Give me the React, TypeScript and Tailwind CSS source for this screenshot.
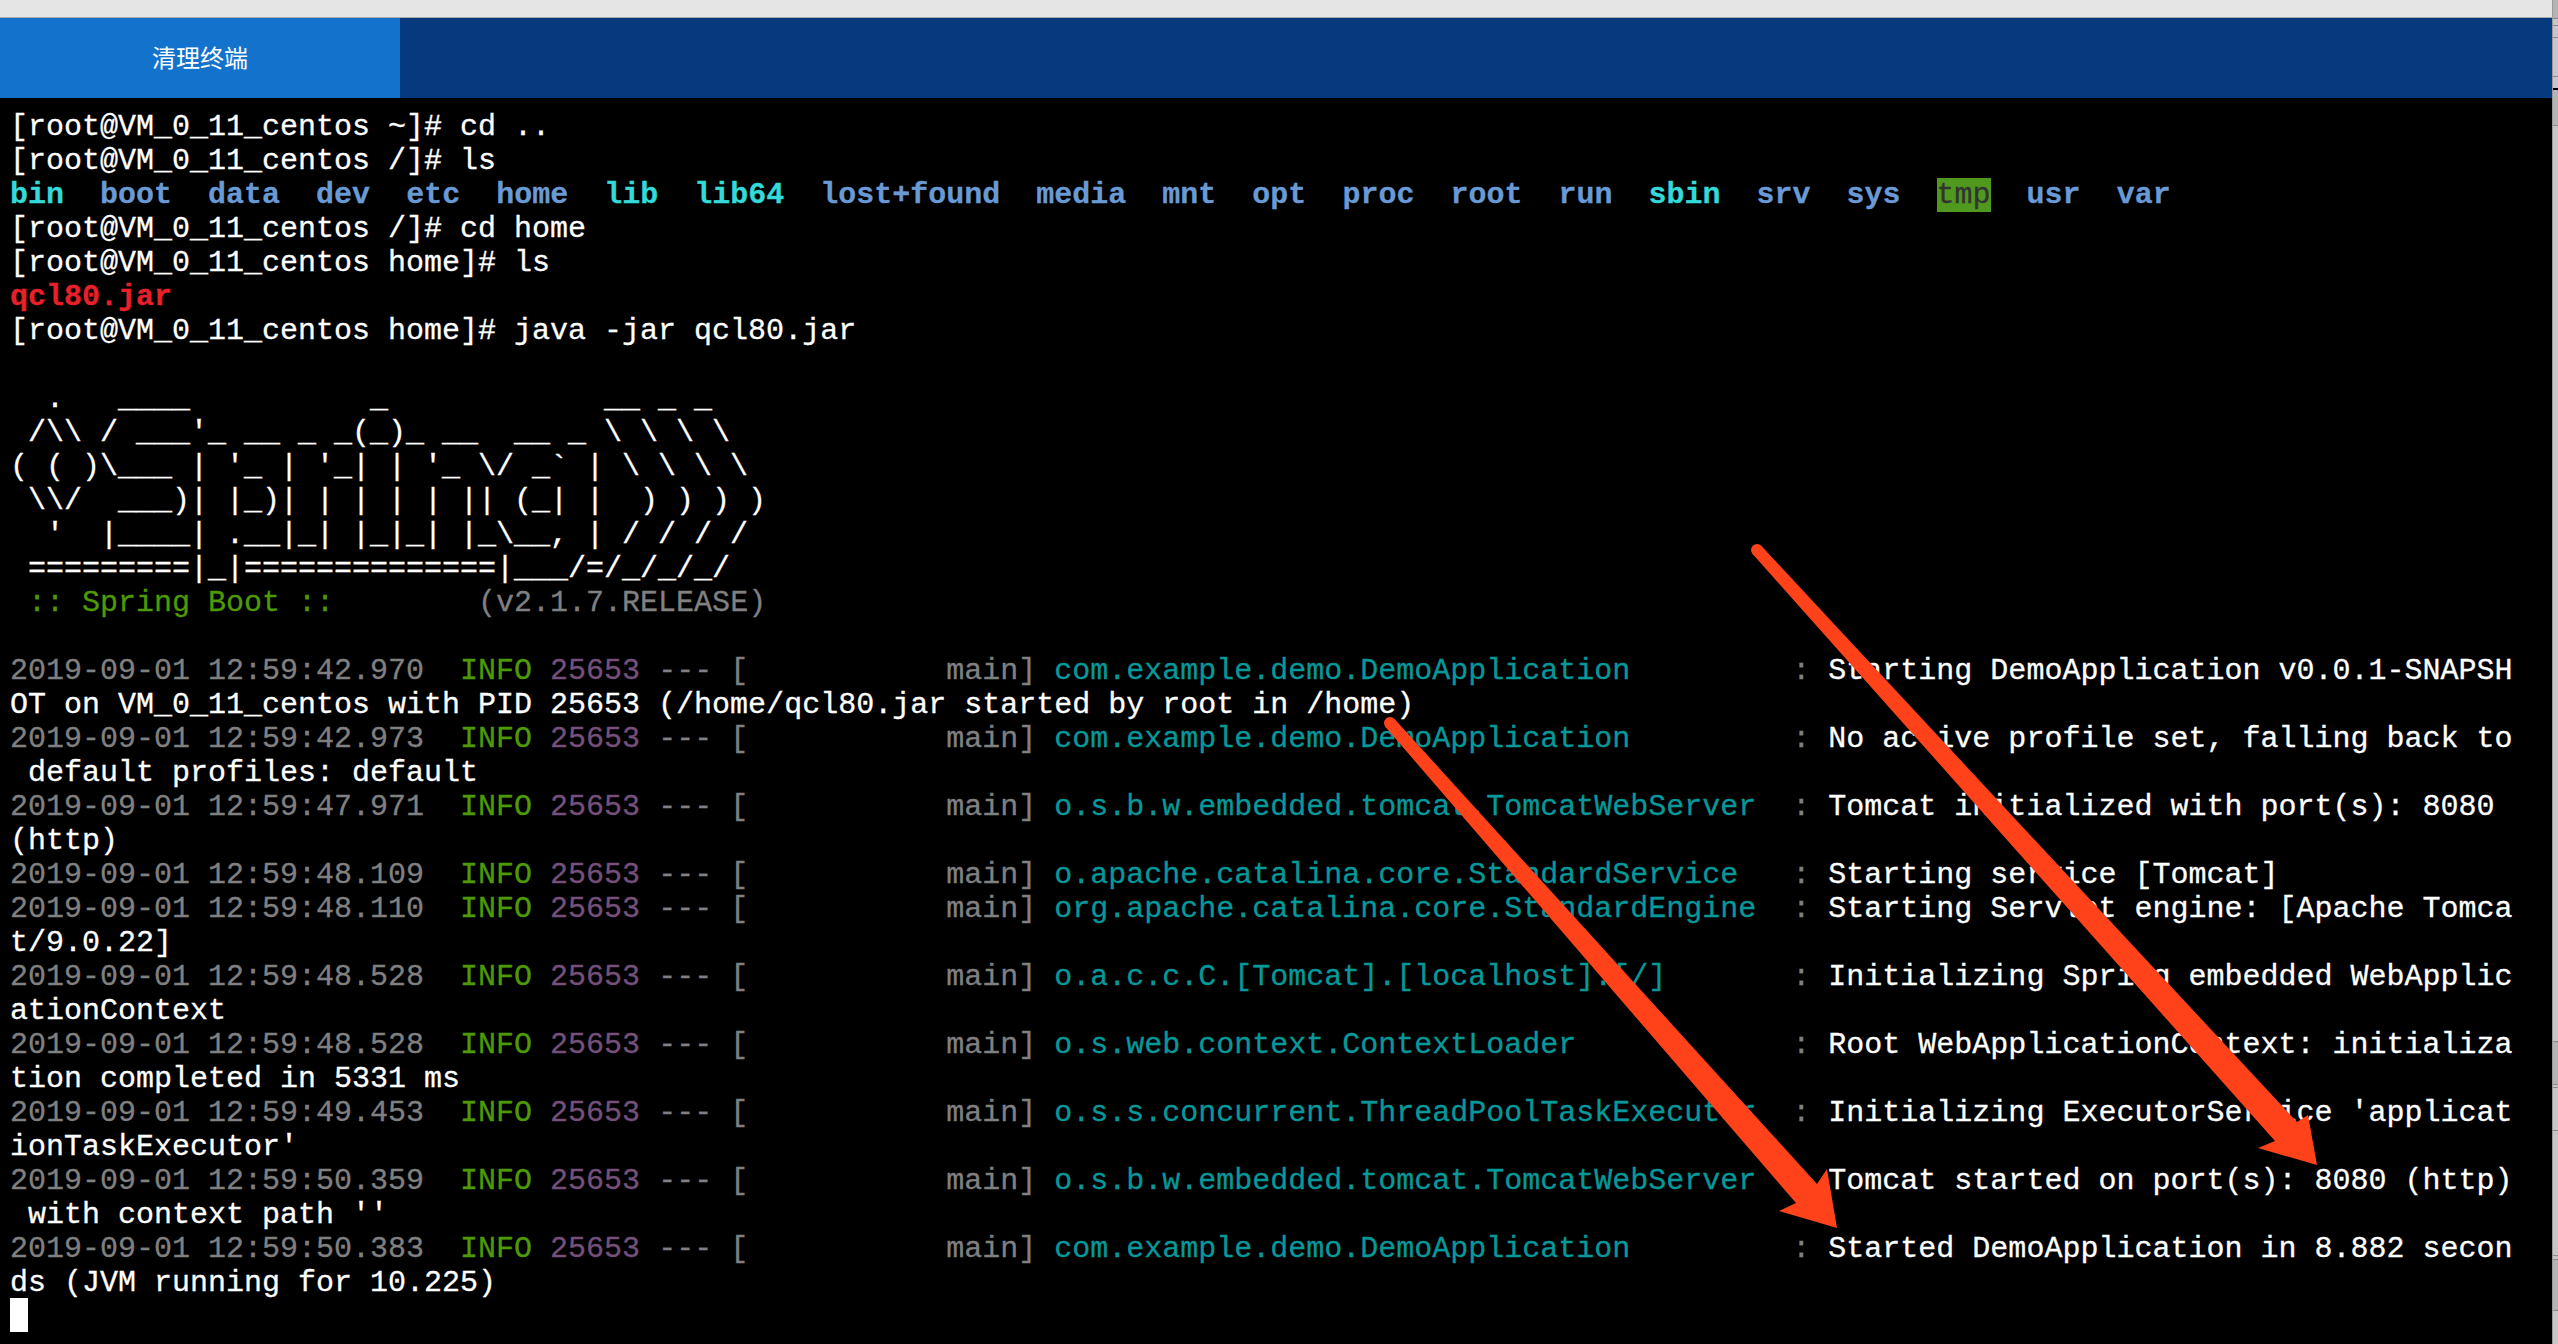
import React from "react";

type Log = { t: string; pid?: string; logger: string; msg: string; cont?: string };

const logs: Log[] = [
  { t: "2019-09-01 12:59:42.970", logger: "com.example.demo.DemoApplication        ", msg: "Starting DemoApplication v0.0.1-SNAPSH", cont: "OT on VM_0_11_centos with PID 25653 (/home/qcl80.jar started by root in /home)" },
  { t: "2019-09-01 12:59:42.973", logger: "com.example.demo.DemoApplication        ", msg: "No active profile set, falling back to", cont: " default profiles: default" },
  { t: "2019-09-01 12:59:47.971", logger: "o.s.b.w.embedded.tomcat.TomcatWebServer ", msg: "Tomcat initialized with port(s): 8080", cont: "(http)" },
  { t: "2019-09-01 12:59:48.109", logger: "o.apache.catalina.core.StandardService  ", msg: "Starting service [Tomcat]" },
  { t: "2019-09-01 12:59:48.110", logger: "org.apache.catalina.core.StandardEngine ", msg: "Starting Servlet engine: [Apache Tomca", cont: "t/9.0.22]" },
  { t: "2019-09-01 12:59:48.528", logger: "o.a.c.c.C.[Tomcat].[localhost].[/]      ", msg: "Initializing Spring embedded WebApplic", cont: "ationContext" },
  { t: "2019-09-01 12:59:48.528", logger: "o.s.web.context.ContextLoader           ", msg: "Root WebApplicationContext: initializa", cont: "tion completed in 5331 ms" },
  { t: "2019-09-01 12:59:49.453", logger: "o.s.s.concurrent.ThreadPoolTaskExecutor ", msg: "Initializing ExecutorService 'applicat", cont: "ionTaskExecutor'" },
  { t: "2019-09-01 12:59:50.359", logger: "o.s.b.w.embedded.tomcat.TomcatWebServer ", msg: "Tomcat started on port(s): 8080 (http)", cont: " with context path ''" },
  { t: "2019-09-01 12:59:50.383", logger: "com.example.demo.DemoApplication        ", msg: "Started DemoApplication in 8.882 secon", cont: "ds (JVM running for 10.225)" },
];

const dirs: [string, string][] = [
  ["bin", "text-[#34d9d9]"], ["boot", "text-[#6a9ad6]"], ["data", "text-[#6a9ad6]"], ["dev", "text-[#6a9ad6]"], ["etc", "text-[#6a9ad6]"],
  ["home", "text-[#6a9ad6]"], ["lib", "text-[#34d9d9]"], ["lib64", "text-[#34d9d9]"], ["lost+found", "text-[#6a9ad6]"], ["media", "text-[#6a9ad6]"],
  ["mnt", "text-[#6a9ad6]"], ["opt", "text-[#6a9ad6]"], ["proc", "text-[#6a9ad6]"], ["root", "text-[#6a9ad6]"], ["run", "text-[#6a9ad6]"],
  ["sbin", "text-[#34d9d9]"], ["srv", "text-[#6a9ad6]"], ["sys", "text-[#6a9ad6]"],
];

const banner = [
  "  .   ____          _            __ _ _",
  " /\\\\ / ___'_ __ _ _(_)_ __  __ _ \\ \\ \\ \\",
  "( ( )\\___ | '_ | '_| | '_ \\/ _` | \\ \\ \\ \\",
  " \\\\/  ___)| |_)| | | | | || (_| |  ) ) ) )",
  "  '  |____| .__|_| |_|_| |_\\__, | / / / /",
  " =========|_|==============|___/=/_/_/_/",
];

function Row({ children, className = "" }: { children?: React.ReactNode; className?: string }) {
  return <div className={`h-[34px] whitespace-pre ${className}`}>{children}</div>;
}

function LogEntry({ log }: { log: Log }) {
  return (
    <>
      <Row>
        <span className="text-[#808080]">{log.t}  </span>
        <span className="text-[#4e9a06]">INFO </span>
        <span className="text-[#75507b]">25653</span>
        <span className="text-[#808080]"> --- [           main] </span>
        <span className="text-[#06989a]">{log.logger}</span>
        <span className="text-[#808080]"> : </span>
        {log.msg}
      </Row>
      {log.cont !== undefined && <Row>{log.cont}</Row>}
    </>
  );
}

export default function App() {
  return (
    <div className="relative flex h-screen w-full overflow-hidden bg-[#c6c6c6]">
      <div className="flex min-w-0 flex-1 flex-col">
        <div className="h-[18px] shrink-0 border-b border-[#a9a9a9] bg-[#e5e5e5]" />
        <div className="flex h-[80px] shrink-0 bg-[#053a7e]">
          <button className="flex w-[400px] items-center justify-center bg-[#1373cc] pb-[2px] font-['Noto_Sans_CJK_SC',sans-serif] text-[24px] text-white">
            清理终端
          </button>
        </div>
        <div className="flex-1 bg-black pl-[10px] pt-[10px] font-['Liberation_Mono',monospace] text-[30px] leading-[38px] text-white [-webkit-text-stroke:0.3px_currentColor]">
          <Row>[root@VM_0_11_centos ~]# cd ..</Row>
          <Row>[root@VM_0_11_centos /]# ls</Row>
          <Row className="font-bold">
            {dirs.map(([name, color]) => (
              <span key={name}>
                <span className={color}>{name}</span>
                {"  "}
              </span>
            ))}
            <span className="bg-[#4f9a1e] font-normal text-[#333333]">tmp</span>
            {"  "}
            <span className="text-[#6a9ad6]">usr</span>
            {"  "}
            <span className="text-[#6a9ad6]">var</span>
          </Row>
          <Row>[root@VM_0_11_centos /]# cd home</Row>
          <Row>[root@VM_0_11_centos home]# ls</Row>
          <Row className="font-bold text-[#e8202a]">qcl80.jar</Row>
          <Row>[root@VM_0_11_centos home]# java -jar qcl80.jar</Row>
          <Row />
          {banner.map((line) => (
            <Row key={line}>{line}</Row>
          ))}
          <Row>
            <span className="text-[#4e9a06]"> :: Spring Boot ::</span>
            <span className="text-[#808080]">        (v2.1.7.RELEASE)</span>
          </Row>
          <Row />
          {logs.map((log, i) => (
            <LogEntry key={i} log={log} />
          ))}
          <div className="h-[34px] w-[18px] bg-white" />
        </div>
      </div>

      <div className="flex w-[6px] shrink-0 flex-col border-l border-[#9a9a9a] bg-[#c6c6c6]">
        <div className="h-[19px] border-b border-[#8a8a8a] bg-[#b4b4b4]" />
        <div className="h-[7px] border-b border-[#8a8a8a]" />
        <div className="h-[12px] border-b border-[#8a8a8a]" />
        <div className="h-[39px] border-b border-[#8a8a8a]" />
        <div className="h-[13px] border-b-2 border-black" />
        <div className="h-[36px] border-b border-[#8a8a8a] bg-[#b4b4b4]" />
        <div className="h-[916px] border-b border-[#8a8a8a]" />
        <div className="h-[43px] border-b border-[#8a8a8a] bg-[#b4b4b4]" />
        <div className="h-[3px] border-b border-[#8a8a8a]" />
        <div className="h-[43px] border-b border-[#8a8a8a]" />
        <div className="h-[125px] border-b border-[#8a8a8a]" />
        <div className="h-[4px] border-b border-[#8a8a8a]" />
        <div className="h-[51px] border-b border-[#8a8a8a] bg-[#b4b4b4]" />
      </div>

      <svg className="pointer-events-none absolute inset-0" width="2558" height="1344" viewBox="0 0 2558 1344">
        <circle cx="1757" cy="550" r="6" fill="#ff4219" />
        <polygon
          fill="#ff4219"
          points="1761.4,546 2297,1122 2308,1115 2317,1165 2258,1148 2275,1141 1752.6,554"
        />
        <circle cx="1390" cy="723" r="6" fill="#ff4219" />
        <polygon
          fill="#ff4219"
          points="1394.5,719 1817,1184 1827,1169 1837,1228 1779,1211 1796,1203 1385.5,727"
        />
      </svg>
    </div>
  );
}
